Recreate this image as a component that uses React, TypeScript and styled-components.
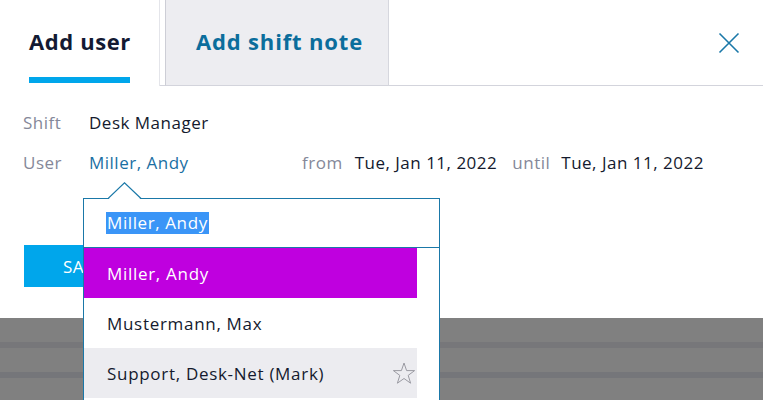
import React from "react";
import styled, { createGlobalStyle } from "styled-components";

const Global = createGlobalStyle`
  html, body { margin: 0; padding: 0; background: #fff; }
  body { font-family: "Open Sans", "Noto Sans", sans-serif; }
`;

const Page = styled.div`
  width: 763px;
  height: 400px;
  overflow: hidden;
  position: relative;
  display: flex;
  flex-direction: column;
`;

const Modal = styled.div`
  height: 318px;
  background: #fff;
  flex: none;
`;

const Header = styled.div`
  height: 86px;
  display: flex;
  align-items: stretch;
`;

const ActiveTab = styled.div`
  width: 130px;
  padding-left: 29px;
  border-right: 1px solid #e4e5ea;
  display: flex;
  flex-direction: column;
`;

const ActiveLabel = styled.div`
  margin-top: 26px;
  font-size: 22px;
  font-weight: 700;
  letter-spacing: 0.6px;
  color: #131a33;
  line-height: 30px;
  width: fit-content;
`;

const Underline = styled.div`
  margin-top: 21px;
  width: 101px;
  height: 6px;
  background: #00a6eb;
`;

const Gap = styled.div`
  width: 5px;
  border-bottom: 1px solid #d3d4dc;
`;

const Tab = styled.div`
  width: 224px;
  background: #ededf1;
  border-left: 1px solid #cdced6;
  border-right: 1px solid #d6d7de;
  border-bottom: 1px solid #d3d4dc;
  display: flex;
  justify-content: center;
  padding: 26px 0 0 5px;
  box-sizing: border-box;
  font-size: 22px;
  font-weight: 700;
  letter-spacing: 0.85px;
  color: #0b6d9c;
  line-height: 30px;
`;

const HeaderRest = styled.div`
  flex: 1;
  border-bottom: 1px solid #d3d4dc;
  display: flex;
  justify-content: flex-end;
  padding: 32px 23px 0 0;
  box-sizing: border-box;
`;

const CloseIcon = () => (
  <svg width="22" height="22" viewBox="0 0 22 22">
    <path d="M1.5 1.5 L20.5 20.5 M20.5 1.5 L1.5 20.5" stroke="#1a78a8" strokeWidth="1.6" fill="none" />
  </svg>
);

const Form = styled.div`
  padding: 26px 0 0 23px;
  display: flex;
  flex-direction: column;
  gap: 18px;
`;

const Row = styled.div`
  display: flex;
  align-items: center;
  height: 22px;
  font-size: 17px;
  letter-spacing: 0.5px;
  line-height: 22px;
`;

const Label = styled.span<{ $w?: number }>`
  color: #858899;
  width: ${(p) => (p.$w ? `${p.$w}px` : "auto")};
  flex: none;
`;

const Value = styled.span<{ $link?: boolean; $w?: number }>`
  color: ${(p) => (p.$link ? "#1a6fa3" : "#141a2e")};
  width: ${(p) => (p.$w ? `${p.$w}px` : "auto")};
  flex: none;
`;

const Spaced = styled.span<{ $ml: number; $gap: number }>`
  margin-left: ${(p) => p.$ml}px;
  display: inline-flex;
  gap: ${(p) => p.$gap}px;
`;

const SaveButton = styled.button`
  margin: 71px 0 0 24px;
  height: 42px;
  width: 130px;
  border: none;
  background: #00a6eb;
  color: #fff;
  font-family: inherit;
  font-size: 17px;
  letter-spacing: 0.5px;
  text-align: left;
  padding-left: 39px;
`;

const Backdrop = styled.div`
  flex: 1;
  background: #808080;
  display: flex;
  flex-direction: column;
`;

const Stripe = styled.div<{ $top: number; $color: string }>`
  margin-top: ${(p) => p.$top}px;
  height: 6px;
  background: ${(p) => p.$color};
`;

const Dropdown = styled.div`
  position: absolute;
  left: 83px;
  top: 198px;
  width: 355px;
  height: 220px;
  border: 1px solid #1a78a8;
  background: #fff;
`;

const Caret = styled.svg`
  position: absolute;
  left: 24px;
  top: -17px;
`;

const Search = styled.div`
  height: 48px;
  border-bottom: 1px solid #1a78a8;
  display: flex;
  align-items: center;
  padding-left: 22px;
  font-size: 17px;
  letter-spacing: 0.6px;
`;

const Selection = styled.span`
  background: #3a95f7;
  color: #fff;
  line-height: 22px;
  padding: 0 1px;
`;

const List = styled.div`
  width: 333px;
`;

const Option = styled.div<{ $bg: string; $color: string }>`
  height: 50px;
  display: flex;
  align-items: center;
  justify-content: space-between;
  padding: 0 1px 0 23px;
  font-size: 17px;
  letter-spacing: 0.7px;
  background: ${(p) => p.$bg};
  color: ${(p) => p.$color};
`;

const StarIcon = () => (
  <svg width="24" height="23" viewBox="0 0 24 23">
    <polygon
      points="12,1 14.6,8.6 22.6,8.6 16.2,13.4 18.6,21.2 12,16.5 5.4,21.2 7.8,13.4 1.4,8.6 9.4,8.6"
      fill="none"
      stroke="#9a9aa2"
      strokeWidth="1"
    />
  </svg>
);

export default function App() {
  return (
    <Page>
      <Global />
      <Modal>
        <Header>
          <ActiveTab>
            <ActiveLabel>Add user</ActiveLabel>
            <Underline />
          </ActiveTab>
          <Gap />
          <Tab>Add shift note</Tab>
          <HeaderRest>
            <CloseIcon />
          </HeaderRest>
        </Header>
        <Form>
          <Row>
            <Label $w={66}>Shift</Label>
            <Value>Desk Manager</Value>
          </Row>
          <Row>
            <Label $w={66}>User</Label>
            <Value $link $w={213}>Miller, Andy</Value>
            <Spaced $ml={0} $gap={12}>
              <Label>from</Label>
              <Value>Tue, Jan 11, 2022</Value>
            </Spaced>
            <Spaced $ml={15} $gap={11}>
              <Label>until</Label>
              <Value>Tue, Jan 11, 2022</Value>
            </Spaced>
          </Row>
        </Form>
        <SaveButton>SAVE</SaveButton>
      </Modal>
      <Backdrop>
        <Stripe $top={24} $color="#77777a" />
        <Stripe $top={24} $color="#75767a" />
      </Backdrop>
      <Dropdown>
        <Caret width="34" height="18" viewBox="0 0 34 18">
          <polygon points="0,17.5 16.5,1 33,17.5" fill="#fff" stroke="none" />
          <polyline points="0,16.5 16.5,0.8 33,16.5" fill="none" stroke="#1a78a8" strokeWidth="1.2" />
        </Caret>
        <Search>
          <Selection>Miller, Andy</Selection>
        </Search>
        <List>
          <Option $bg="#bf00df" $color="#fff">Miller, Andy</Option>
          <Option $bg="#fff" $color="#141a2e">Mustermann, Max</Option>
          <Option $bg="#ececf0" $color="#141a2e">
            Support, Desk-Net (Mark)
            <StarIcon />
          </Option>
        </List>
      </Dropdown>
    </Page>
  );
}
